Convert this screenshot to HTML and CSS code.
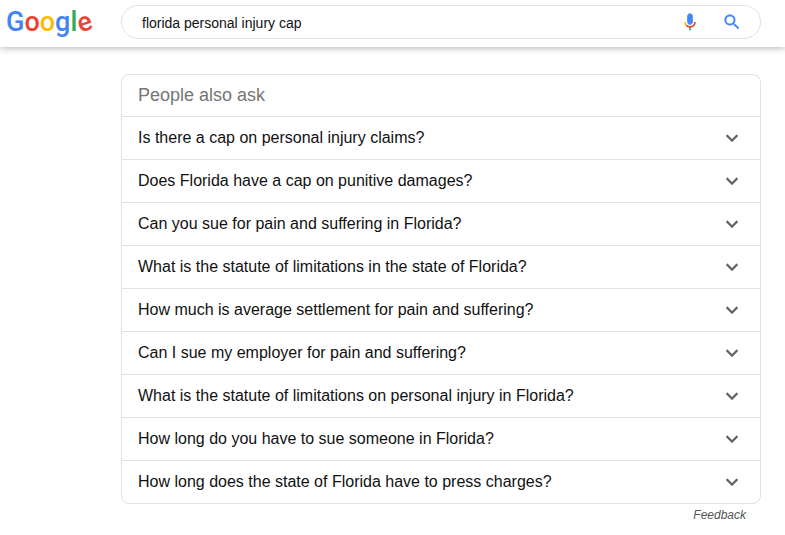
FILE: index.html
```html
<!DOCTYPE html>
<html lang="en">
<head>
    <meta charset="UTF-8">
    <meta name="viewport" content="width=device-width, initial-scale=1.0">
    <title>florida personal injury cap - Google Search</title>
    <link rel="stylesheet" href="styles.css">
</head>
<body>
    <!-- Chevron shared by all the questions -->
    <svg class="symbols" aria-hidden="true">
        <symbol id="chevron" viewBox="0 0 24 24">
            <path d="M7.41 8.59 12 13.17l4.59-4.58L18 10l-6 6-6-6z"/>
        </symbol>
    </svg>

    <header class="header">
        <a class="logo" href="#" aria-label="Google"><span class="blue">G</span><span class="red">o</span><span class="yellow">o</span><span class="blue">g</span><span class="green">l</span><span class="red tilt">e</span></a>

        <form class="search-box" role="search" onsubmit="return false">
            <input class="search-input" type="text" name="q" aria-label="Search" value="florida personal injury cap">
            <button class="icon-btn" type="button" aria-label="Search by voice">
                <svg viewBox="0 0 24 24">
                    <path fill="#4285f4" stroke="#4285f4" stroke-width=".8" d="M12 15c1.66 0 3-1.31 3-2.97V4.97C15 3.31 13.66 2 12 2S9 3.31 9 4.97v7.06C9 13.69 10.34 15 12 15z"/>
                    <path fill="#34a853" d="M11 18.08h2V22h-2z"/>
                    <path fill="#fbbc05" d="M7.05 16.87C5.78 15.59 5 13.92 5 12H7c0 1.45.56 2.42 1.47 3.38v.32l-1.15 1.18z"/>
                    <path fill="#ea4335" d="M12 16.93a4.97 4.97 0 0 1-3.54-1.55l-1.41 1.49C8.31 18.14 9.96 18.93 12 18.93c3.87 0 6.99-2.92 6.99-6.93H17c0 2.92-2.24 4.93-5 4.93z"/>
                </svg>
            </button>
            <button class="icon-btn" type="submit" aria-label="Google Search">
                <svg viewBox="0 0 24 24">
                    <path fill="#4285f4" stroke="#4285f4" stroke-width=".4" d="M15.5 14h-.79l-.28-.27A6.47 6.47 0 0 0 16 9.5 6.5 6.5 0 1 0 9.5 16c1.61 0 3.09-.59 4.23-1.57l.27.28v.79l5 4.99L20.49 19zm-6 0a4.5 4.5 0 1 1 0-9 4.5 4.5 0 0 1 0 9z"/>
                </svg>
            </button>
        </form>
    </header>

    <main class="content">
        <section class="questions">
            <h2>People also ask</h2>
            <button class="question" type="button">Is there a cap on personal injury claims?<svg><use href="#chevron"/></svg></button>
            <button class="question" type="button">Does Florida have a cap on punitive damages?<svg><use href="#chevron"/></svg></button>
            <button class="question" type="button">Can you sue for pain and suffering in Florida?<svg><use href="#chevron"/></svg></button>
            <button class="question" type="button">What is the statute of limitations in the state of Florida?<svg><use href="#chevron"/></svg></button>
            <button class="question" type="button">How much is average settlement for pain and suffering?<svg><use href="#chevron"/></svg></button>
            <button class="question" type="button">Can I sue my employer for pain and suffering?<svg><use href="#chevron"/></svg></button>
            <button class="question" type="button">What is the statute of limitations on personal injury in Florida?<svg><use href="#chevron"/></svg></button>
            <button class="question" type="button">How long do you have to sue someone in Florida?<svg><use href="#chevron"/></svg></button>
            <button class="question" type="button">How long does the state of Florida have to press charges?<svg><use href="#chevron"/></svg></button>
        </section>
        <a class="feedback" href="#">Feedback</a>
    </main>
</body>
</html>
```
FILE: styles.css
```css
* {
    box-sizing: border-box;
}

body {
    margin: 0;
    background: #fff;
    color: #111;
    font-family: "Liberation Sans", Arial, sans-serif;
}

.symbols {
    display: none;
}

.header {
    display: flex;
    padding: 5px 24px 8px 0;
    background: #fff;
    box-shadow: 0 1px 7px rgba(0, 0, 0, 0.3);
}

.logo {
    flex: 0 0 121px;
    padding-left: 6px;
    font-family: Roboto, sans-serif;
    font-size: 27px;
    font-weight: 500;
    line-height: 34px;
    text-decoration: none;
}

.blue {
    color: #4285f4;
}

.red {
    color: #ea4335;
}

.yellow {
    color: #fbbc05;
}

.green {
    color: #34a853;
}

.tilt {
    display: inline-block;
    transform: rotate(-18deg);
}

.search-box {
    display: flex;
    flex: 1;
    align-items: center;
    height: 34px;
    max-width: 640px;
    padding: 0 18px 0 20px;
    border: 1px solid #dfe1e5;
    border-radius: 17px;
}

.search-input {
    flex: 1;
    min-width: 0;
    padding: 2px 0 0;
    border: none;
    outline: none;
    background: none;
    color: #111;
    font-family: inherit;
    font-size: 14px;
}

.icon-btn {
    display: flex;
    margin-left: 22px;
    padding: 0;
    border: none;
    background: none;
    cursor: pointer;
}

.icon-btn svg {
    width: 20px;
    height: 20px;
}

.content {
    display: flex;
    flex-direction: column;
    max-width: 785px;
    padding: 27px 24px 16px 121px;
}

.questions {
    border: 1px solid #dfe1e5;
    border-radius: 8px;
    overflow: hidden;
}

.questions h2 {
    margin: 0;
    padding: 0 16px;
    color: #757575;
    font-size: 18px;
    font-weight: normal;
    line-height: 41px;
}

.question {
    display: flex;
    justify-content: space-between;
    align-items: center;
    width: 100%;
    min-height: 43px;
    padding: 0 16px;
    border: none;
    border-top: 1px solid #dfe1e5;
    background: none;
    color: #111;
    font-family: inherit;
    font-size: 16px;
    text-align: left;
    cursor: pointer;
}

.question svg {
    flex: none;
    width: 24px;
    height: 24px;
    fill: #5f6368;
    stroke: #5f6368;
    stroke-width: 0.3;
}

.feedback {
    align-self: flex-end;
    margin: 3px 15px 0 0;
    color: #555;
    font-size: 12px;
    font-style: italic;
    line-height: 16px;
    text-decoration: none;
}
```
